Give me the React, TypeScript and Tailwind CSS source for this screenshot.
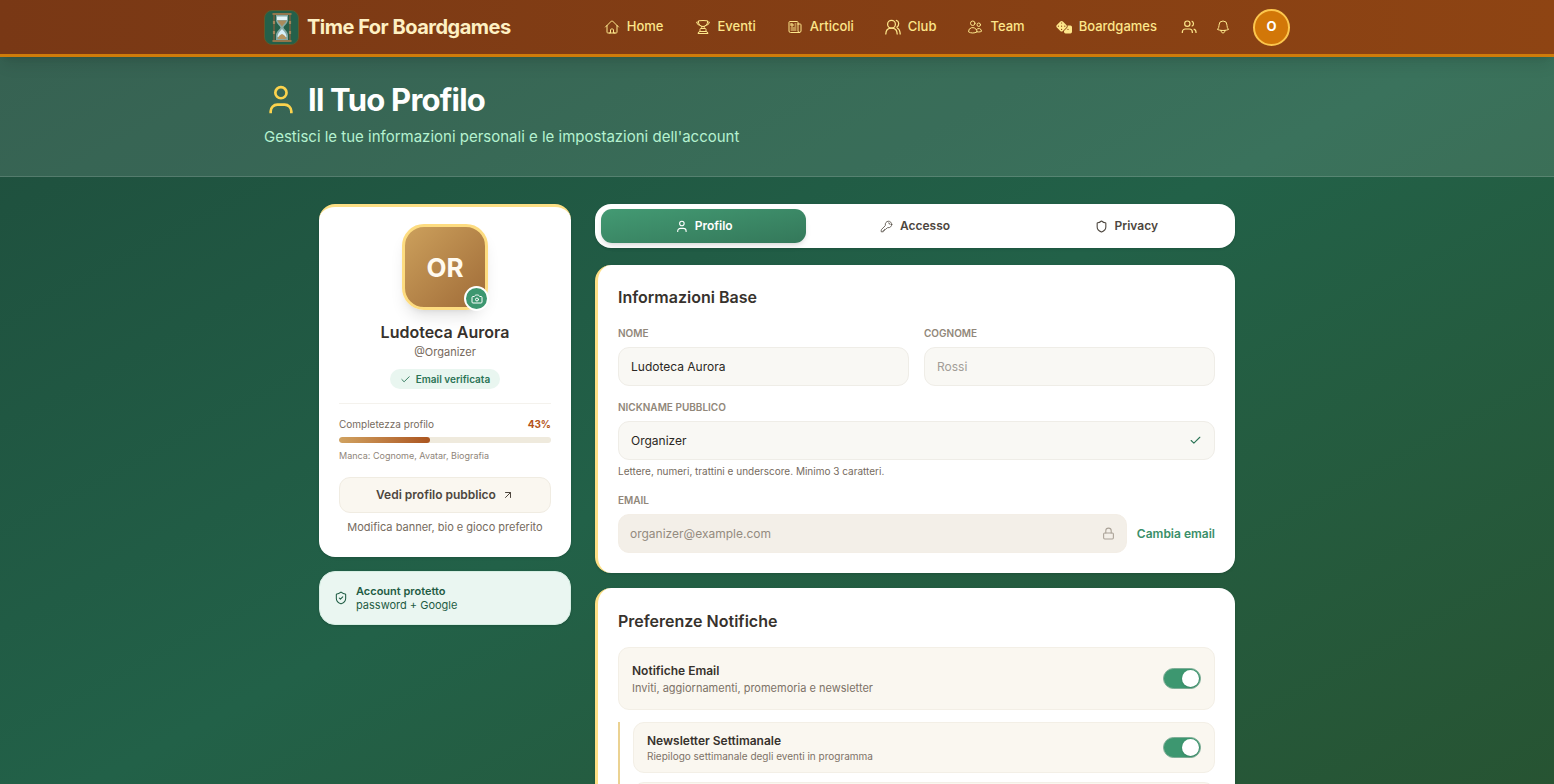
import { useState, type ReactNode } from "react";
import {
  HiOutlineBell,
  HiOutlineHome,
  HiOutlineKey,
  HiOutlineNewspaper,
  HiOutlineTrophy,
  HiOutlineUsers,
} from "react-icons/hi2";
import { FaDice } from "react-icons/fa6";
import { ArrowUpRight, Camera, Check, Lock, Shield, ShieldCheck } from "lucide-react";

function PersonIcon({ className }: { className?: string }) {
  return (
    <svg viewBox="0 0 24 24" fill="none" stroke="currentColor" strokeWidth="2" className={className} aria-hidden="true">
      <circle cx="12.700" cy="6.500" r="4.200" />
      <path d="M5 22v-1.500a5 5 0 0 1 5-5h5.500a5 5 0 0 1 5 5V22" />
    </svg>
  );
}

function PeopleIcon({ className }: { className?: string }) {
  return (
    <svg viewBox="0 0 24 24" fill="none" stroke="currentColor" strokeWidth="1.800" className={className} aria-hidden="true">
      <circle cx="9.500" cy="7" r="4" />
      <path d="M2 21v-1.500a4.500 4.500 0 0 1 4.500-4.500h6a4.500 4.500 0 0 1 4.500 4.500V21" />
      <path d="M16 3.200a4 4 0 0 1 0 7.600M19 15.300a4.500 4.500 0 0 1 3.500 4.300V21" />
    </svg>
  );
}

function ClubIcon({ className }: { className?: string }) {
  return (
    <svg
      viewBox="0 0 16 16"
      fill="none"
      stroke="currentColor"
      strokeWidth="1.250"
      strokeLinecap="round"
      className={className}
      aria-hidden="true"
    >
      <circle cx="6.500" cy="5.200" r="3.900" />
      <path d="M.8 15c.1-3.600 2.300-5.800 5.700-5.800s5.600 2.200 5.700 5.800" />
      <path d="M11.300 1.400c2.900.6 3.300 4.900.5 6.800M12.600 9.200c1.700 1 2.500 3 2.600 5.800" />
    </svg>
  );
}

function HourglassLogo() {
  return (
    <svg viewBox="0 0 35 35" className="size-[35px] shrink-0" aria-hidden="true">
      <rect x="0.500" y="0.500" width="34" height="34" rx="7.500" fill="#24604a" stroke="#5d5a2c" />
      <path d="M12 5h12v4.500c0 4-3.500 5.500-4.500 8 1 2.500 4.500 4 4.500 8V30H12v-4.500c0-4 3.500-5.500 4.500-8-1-2.500-4.500-4-4.500-8z" fill="#86a9a5" />
      <path d="M13 6.500h10V10H13z" fill="#e4f4f7" />
      <path d="M13.500 10.500h9c-.7 2.600-3.300 4-4.500 6-1.200-2-3.800-3.400-4.500-6z" fill="#a98a5c" />
      <path d="M18 19c2 2.500 4.200 4 4.500 8h-9c.3-4 2.500-5.500 4.500-8z" fill="#d8f1fa" />
      <path d="M18 24c2 1 3.800 2 4.300 5h-8.600c.5-3 2.300-4 4.300-5z" fill="#b79561" />
      <path d="M8.500 4h19M8.500 31h19" stroke="#93764c" strokeWidth="1.800" />
      <path d="M10 5v25M26 5v25" stroke="#7a6040" strokeWidth="1.400" />
      <path d="M10 11v3M26 11v3M10 21v3M26 21v3" stroke="#a3845a" strokeWidth="2.200" />
    </svg>
  );
}

const navItems = [
  { label: "Home", icon: <HiOutlineHome className="size-4" /> },
  { label: "Eventi", icon: <HiOutlineTrophy className="size-4" /> },
  { label: "Articoli", icon: <HiOutlineNewspaper className="size-4" /> },
  { label: "Club", icon: <ClubIcon className="size-4" /> },
  { label: "Team", icon: <HiOutlineUsers className="size-4" /> },
  { label: "Boardgames", icon: <FaDice className="size-4" /> },
];

function Header() {
  return (
    <header className="relative z-10 border-b-3 border-[#cf7c0a] bg-linear-to-r from-[#793815] to-[#8e4413] text-[#fde68a] shadow-lg">
      <div className="mx-auto flex h-[54px] max-w-[1026px] items-center justify-between">
        <a href="#" className="flex items-center gap-2 text-[20px] font-bold tracking-tight text-[#fef0c3]">
          <HourglassLogo />
          Time For Boardgames
        </a>
        <div className="flex items-center">
          <nav className="flex items-center gap-[31px] text-[13px] font-medium">
            {navItems.map((item) => (
              <a key={item.label} href="#" className="flex items-center gap-[7px]">
                {item.icon}
                {item.label}
              </a>
            ))}
          </nav>
          <button type="button" aria-label="Amici" className="ml-6">
            <PeopleIcon className="size-4" />
          </button>
          <button type="button" aria-label="Notifiche" className="ml-[18px]">
            <HiOutlineBell className="size-4" />
          </button>
          <button
            type="button"
            className="ml-[22px] size-[37px] rounded-full border-2 border-[#fcc64d] bg-[#d27708] text-[13px] font-bold text-white"
          >
            O
          </button>
        </div>
      </div>
    </header>
  );
}

function ProfileCard() {
  return (
    <section className="flex flex-col rounded-2xl border-t-3 border-[#fddf85] bg-white px-5 pt-[17px] pb-[22px] text-center shadow-sm">
      <div className="relative mx-auto flex size-[86px] items-center justify-center rounded-[22px] border-3 border-[#fddc80] bg-linear-to-br from-[#cca05c] to-[#a06c38] text-[26px] font-bold text-[#fffaf0] shadow-lg">
        OR
        <button
          type="button"
          aria-label="Cambia avatar"
          className="absolute -right-1 -bottom-1 flex size-[25px] items-center justify-center rounded-full border-2 border-white bg-[#3d9770] text-white"
        >
          <Camera className="size-3" />
        </button>
      </div>
      <h2 className="mt-[10px] text-base leading-6 font-semibold text-[#37322d]">Ludoteca Aurora</h2>
      <p className="text-[11px] leading-4 text-[#76695c]">@Organizer</p>
      <span className="mx-auto mt-[9px] flex h-5 items-center gap-[5px] rounded-full bg-[#e9f6f0] px-[10px] text-[10px] font-semibold text-[#2b7456]">
        <Check className="size-[11px]" />
        Email verificata
      </span>
      <hr className="mt-[14px] border-[#f4f2ed]" />
      <div className="mt-3 flex justify-between text-[10px] leading-4 text-[#766b60]">
        <span>Completezza profilo</span>
        <span className="font-bold text-[#b45217]">43%</span>
      </div>
      <div
        role="progressbar"
        aria-label="Completezza profilo"
        aria-valuenow={43}
        className="mt-[5px] h-[6px] overflow-hidden rounded-full bg-[#efeadd]"
      >
        <div className="h-full w-[43%] rounded-full bg-linear-to-r from-[#d0a260] to-[#ab5520]" />
      </div>
      <p className="mt-[5px] text-left text-[9px] leading-4 text-[#8f857a]">Manca: Cognome, Avatar, Biografia</p>
      <a
        href="#"
        className="mt-[13px] flex h-9 items-center justify-center gap-[6px] rounded-[11px] border border-[#f0ece2] bg-[#faf7f0] text-xs font-semibold text-[#4d463e]"
      >
        Vedi profilo pubblico
        <ArrowUpRight className="size-3" />
      </a>
      <p className="mt-[6px] text-[11px] leading-4 text-[#766b60]">Modifica banner, bio e gioco preferito</p>
    </section>
  );
}

function SecurityCard() {
  return (
    <section className="mt-[14px] flex h-[54px] items-center gap-2 rounded-2xl border border-[#d6eee3] bg-[#eaf6f1] px-[14px] text-[#1f5c44] shadow-sm">
      <ShieldCheck className="size-[14px]" strokeWidth={1.8} />
      <div className="text-[11px] leading-[14px]">
        <p className="font-semibold">Account protetto</p>
        <p>password + Google</p>
      </div>
    </section>
  );
}

const tabs = [
  { id: "profilo", label: "Profilo", icon: <PersonIcon className="size-[13px]" /> },
  { id: "accesso", label: "Accesso", icon: <HiOutlineKey className="size-[13px]" /> },
  { id: "privacy", label: "Privacy", icon: <Shield className="size-[13px]" /> },
];

function Tabs() {
  const [active, setActive] = useState("profilo");
  return (
    <div role="tablist" className="grid h-11 grid-cols-3 gap-[6px] rounded-2xl bg-white px-[6px] py-[5px] shadow-sm">
      {tabs.map((tab) => (
        <button
          key={tab.id}
          type="button"
          role="tab"
          aria-selected={active === tab.id}
          onClick={() => setActive(tab.id)}
          className={
            active === tab.id
              ? "flex items-center justify-center gap-[7px] rounded-[11px] bg-linear-to-br from-[#439a73] to-[#34785a] text-xs font-semibold text-white shadow-md"
              : "flex items-center justify-center gap-[7px] rounded-[11px] text-xs font-semibold text-[#4d463e]"
          }
        >
          {tab.icon}
          {tab.label}
        </button>
      ))}
    </div>
  );
}

function Field({ id, label, children }: { id: string; label: string; children: ReactNode }) {
  return (
    <div>
      <label htmlFor={id} className="mb-[6px] block text-[10px] leading-4 font-semibold text-[#91877a] uppercase">
        {label}
      </label>
      {children}
    </div>
  );
}

function BasicInfo() {
  return (
    <section className="mt-[17px] rounded-2xl border-l-3 border-[#fddf85] bg-white p-5 shadow-sm">
      <h2 className="text-base leading-6 font-semibold text-[#37322d]">Informazioni Base</h2>
      <div className="mt-4 grid grid-cols-2 gap-[15px]">
        <Field id="nome" label="Nome">
          <input
            id="nome"
            defaultValue="Ludoteca Aurora"
            className="h-[39px] w-full rounded-[11px] border border-[#efede7] bg-[#f9f8f4] px-3 text-xs text-[#2b2723] outline-none"
          />
        </Field>
        <Field id="cognome" label="Cognome">
          <input
            id="cognome"
            placeholder="Rossi"
            className="h-[39px] w-full rounded-[11px] border border-[#efede7] bg-[#f9f8f4] px-3 text-xs text-[#2b2723] outline-none placeholder:text-[#a29d97]"
          />
        </Field>
      </div>
      <div className="mt-[13px]">
        <Field id="nickname" label="Nickname pubblico">
          <div className="flex h-[39px] items-center rounded-[11px] border border-[#efede7] bg-[#f9f8f4] px-3 text-[#2b7456]">
            <input id="nickname" defaultValue="Organizer" className="min-w-0 flex-1 text-xs text-[#2b2723] outline-none" />
            <Check className="size-[13px]" />
          </div>
        </Field>
        <p className="mt-[3px] text-[10px] leading-4 text-[#766b60]">
          Lettere, numeri, trattini e underscore. Minimo 3 caratteri.
        </p>
      </div>
      <div className="mt-[13px]">
        <Field id="email" label="Email">
          <div className="flex items-center gap-[10px]">
            <div className="flex h-[39px] flex-1 items-center rounded-[11px] border border-[#f3eee6] bg-[#f3efe8] px-[11px] text-[#aaa297]">
              <input
                id="email"
                type="email"
                readOnly
                defaultValue="organizer@example.com"
                className="min-w-0 flex-1 text-xs text-[#938b7f] outline-none"
              />
              <Lock className="size-[13px]" />
            </div>
            <button type="button" className="text-xs font-semibold text-[#3a8f69]">
              Cambia email
            </button>
          </div>
        </Field>
      </div>
    </section>
  );
}

function Toggle({ id }: { id: string }) {
  return (
    <span className="relative flex h-[21px] w-[38px] shrink-0">
      <input
        id={id}
        type="checkbox"
        role="switch"
        defaultChecked
        className="peer size-full cursor-pointer appearance-none rounded-full border border-[#7fae97] bg-[#d6d3cd] checked:bg-[#3d9770]"
      />
      <span className="pointer-events-none absolute top-[2px] left-[2px] size-[17px] rounded-full bg-white shadow-sm peer-checked:left-[19px]" />
    </span>
  );
}

function Notifications() {
  return (
    <section className="mt-[15px] rounded-t-2xl border-l-3 border-[#fddf85] bg-white px-5 pt-[21px] shadow-sm">
      <h2 className="text-base leading-6 font-semibold text-[#37322d]">Preferenze Notifiche</h2>
      <div className="mt-[14px] flex h-[63px] items-center justify-between rounded-[11px] border border-[#f3efe6] bg-[#faf7f0] px-[13px]">
        <div>
          <label htmlFor="notify-email" className="block text-xs leading-[18px] font-semibold text-[#37322d]">
            Notifiche Email
          </label>
          <p className="text-[11px] leading-4 text-[#7d7267]">Inviti, aggiornamenti, promemoria e newsletter</p>
        </div>
        <Toggle id="notify-email" />
      </div>
      <div className="mt-3 flex flex-col gap-[9px] border-l-2 border-[#ebd292] pl-[13px]">
        <div className="flex h-[51px] items-center justify-between rounded-[11px] border border-[#f3efe6] bg-[#faf7f0] px-[13px]">
          <div>
            <label htmlFor="notify-news" className="block text-xs leading-4 font-semibold text-[#37322d]">
              Newsletter Settimanale
            </label>
            <p className="text-[10px] leading-[14px] text-[#7d7267]">Riepilogo settimanale degli eventi in programma</p>
          </div>
          <Toggle id="notify-news" />
        </div>
        <div className="h-[51px] rounded-[11px] border border-[#f3efe6] bg-[#faf7f0]" />
      </div>
    </section>
  );
}

export default function App() {
  return (
    <div className="min-h-screen bg-linear-to-br from-[#1e4d3c] via-[#226148] to-[#275331] font-['Inter','Liberation_Sans',sans-serif]">
      <Header />
      <div className="h-[120px] border-b border-white/15 bg-white/11">
        <div className="mx-auto max-w-[1026px] pt-[23px]">
          <h1 className="flex items-center gap-3 text-[31px] leading-10 font-bold tracking-tight text-white">
            <PersonIcon className="size-8 text-[#fcd34d]" />
            Il Tuo Profilo
          </h1>
          <p className="mt-[5px] text-[15px] leading-6 text-[#b5f2d0]">
            Gestisci le tue informazioni personali e le impostazioni dell'account
          </p>
        </div>
      </div>
      <main className="mx-auto grid max-w-[916px] grid-cols-[252px_minmax(0,1fr)] items-start gap-6 pt-[27px]">
        <aside>
          <ProfileCard />
          <SecurityCard />
        </aside>
        <div>
          <Tabs />
          <BasicInfo />
          <Notifications />
        </div>
      </main>
    </div>
  );
}
